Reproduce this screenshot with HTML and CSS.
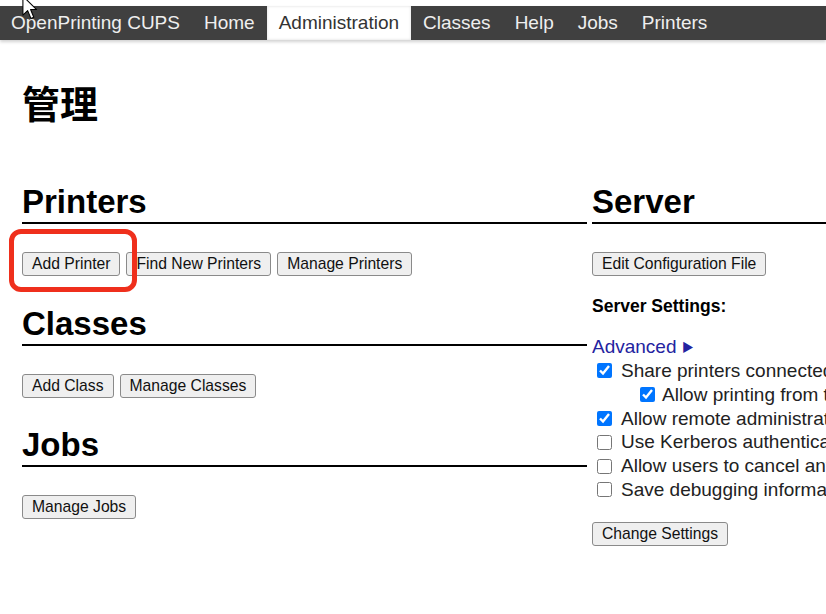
FILE: index.html
```html
<!DOCTYPE html>
<html lang="zh">
<head>
<meta charset="utf-8">
<title>管理 - OpenPrinting CUPS</title>
<link rel="stylesheet" href="styles.css">
</head>
<body>
<header class="topbar">
  <nav class="nav">
    <a class="nav-item first" href="#">OpenPrinting CUPS</a>
    <a class="nav-item" href="#">Home</a>
    <a class="nav-item active" href="#">Administration</a>
    <a class="nav-item" href="#">Classes</a>
    <a class="nav-item" href="#">Help</a>
    <a class="nav-item" href="#">Jobs</a>
    <a class="nav-item" href="#">Printers</a>
  </nav>
</header>

<main class="page">
  <h1 class="title">管理</h1>
  <div class="columns">
    <div class="col-left">
      <section class="section">
        <h2 class="sec-title">Printers</h2>
        <div class="btn-row">
          <button class="btn">Add Printer</button>
          <button class="btn">Find New Printers</button>
          <button class="btn">Manage Printers</button>
        </div>
      </section>
      <section class="section">
        <h2 class="sec-title">Classes</h2>
        <div class="btn-row">
          <button class="btn">Add Class</button>
          <button class="btn">Manage Classes</button>
        </div>
      </section>
      <section class="section">
        <h2 class="sec-title">Jobs</h2>
        <div class="btn-row">
          <button class="btn">Manage Jobs</button>
        </div>
      </section>
    </div>
    <div class="col-right">
      <section class="section">
        <h2 class="sec-title">Server</h2>
        <div class="btn-row">
          <button class="btn">Edit Configuration File</button>
        </div>
        <p class="settings-title">Server Settings:</p>
        <a class="advanced" href="#">Advanced <span class="tri">&#9654;</span></a>
        <ul class="options">
          <li class="opt"><input class="cb" type="checkbox" checked><span>Share printers connected to this system</span></li>
          <li class="opt sub"><input class="cb" type="checkbox" checked><span>Allow printing from the Internet</span></li>
          <li class="opt"><input class="cb" type="checkbox" checked><span>Allow remote administration</span></li>
          <li class="opt"><input class="cb" type="checkbox"><span>Use Kerberos authentication</span></li>
          <li class="opt"><input class="cb" type="checkbox"><span>Allow users to cancel any job (not just their own)</span></li>
          <li class="opt"><input class="cb" type="checkbox"><span>Save debugging information for troubleshooting</span></li>
        </ul>
        <div class="btn-row">
          <button class="btn">Change Settings</button>
        </div>
      </section>
    </div>
  </div>
</main>

<div class="highlight"></div>
<svg class="cursor" width="18" height="26" viewBox="0 0 14 22"><path d="M1 1 L1 17 L5 13.2 L7.8 19.8 L10.2 18.8 L7.5 12.3 L12.6 12.3 Z" fill="#fff" stroke="#000" stroke-width="0.9" stroke-linejoin="round"/></svg>
</body>
</html>
```

FILE: styles.css
```css
html, body {
  margin: 0;
  padding: 0;
  overflow: hidden;
  background: #fff;
}
body {
  font-family: "Liberation Sans", Arial, "Noto Sans CJK SC", sans-serif;
  color: #000;
  width: 826px;
  height: 614px;
  position: relative;
}

/* top navigation */
.topbar {
  margin-top: 6px;
  height: 34px;
  background: #404040;
  box-shadow: 0 2px 3px rgba(0, 0, 0, 0.18);
}
.nav {
  display: flex;
  height: 34px;
}
.nav-item {
  display: block;
  padding: 0 12px;
  line-height: 34px;
  font-size: 19px;
  color: #efefef;
  text-decoration: none;
}
.nav-item.first {
  padding-left: 11px;
}
.nav-item.active {
  background: #fff;
  color: #333;
  box-shadow: 0 0 3px rgba(0, 0, 0, 0.15) inset;
}

/* page */
.page {
  padding-left: 22px;
}
.title {
  margin: 0;
  padding-top: 40px;
  height: 50px;
  line-height: 50px;
  font-size: 38px;
  font-weight: bold;
  font-family: "Liberation Sans", "Noto Sans CJK SC", sans-serif;
  margin-bottom: 53px;
}
.columns {
  display: flex;
  gap: 5px;
}
.col-left {
  flex: none;
  width: 565px;
}
.col-right {
  flex: 1;
  min-width: 0;
  overflow: hidden;
  white-space: nowrap;
}
.section + .section {
  margin-top: 28.5px;
}
.sec-title {
  margin: 0;
  font-size: 33px;
  line-height: 38px;
  font-weight: bold;
  padding-bottom: 1px;
  border-bottom: 2px solid #000;
}
.btn-row {
  display: flex;
  gap: 6px;
  margin-top: 28px;
}
.btn {
  font-family: "Liberation Sans", Arial, sans-serif;
  font-size: 15.7px;
  height: 24px;
  padding: 0 9px;
  border: 1px solid #8a8a8a;
  border-radius: 3px;
  background: #efefef;
  color: #111;
  line-height: 22px;
}

/* server settings */
.settings-title {
  margin: 18.5px 0 0;
  font-weight: bold;
  font-size: 17.5px;
  line-height: 22px;
}
.advanced {
  display: block;
  margin-top: 18.5px;
  font-size: 19px;
  line-height: 24px;
  color: #2323a0;
  text-decoration: none;
}
.tri {
  font-size: 12px;
  vertical-align: 1px;
}
.options {
  list-style: none;
  margin: -1px 0 0;
  padding: 0;
}
.opt {
  display: flex;
  align-items: center;
  font-size: 19px;
  line-height: 23.8px;
  height: 23.8px;
  color: #222;
}
.opt.sub {
  padding-left: 43px;
}
.opt.sub .cb {
  margin-right: 7px;
}
.cb {
  width: 15px;
  height: 15px;
  margin: 0 9px 0 5px;
  flex: none;
  accent-color: #0075ff;
}
.options + .btn-row {
  margin-top: 20px;
}

/* overlays */
.highlight {
  position: absolute;
  left: 9px;
  top: 229px;
  width: 128px;
  height: 63px;
  box-sizing: border-box;
  border: 5px solid #ef2f1c;
  border-radius: 12px;
  pointer-events: none;
}
.cursor {
  position: absolute;
  left: 21px;
  top: -5px;
}
```
